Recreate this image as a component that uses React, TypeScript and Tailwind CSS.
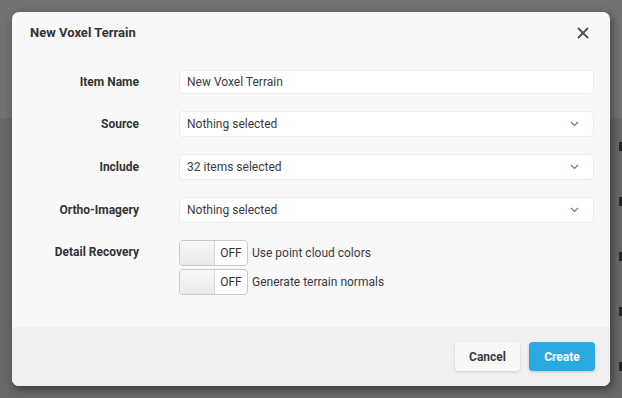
import React from 'react';
import { X } from 'lucide-react';

const Chevron = () => (
  <svg width="9" height="6" viewBox="0 0 9 6" className="shrink-0">
    <polyline points="1,1 4.5,4.5 8,1" fill="none" stroke="#6b7890" strokeWidth="1.2" />
  </svg>
);

const Select = ({ value }: { value: string }) => (
  <div className="flex h-[26px] flex-1 items-center justify-between rounded-[4px] border border-[#ececec] bg-white pl-[7px] pr-[14px] text-[12px] text-[#3a3a44]">
    <span>{value}</span>
    <Chevron />
  </div>
);

const Toggle = ({ label }: { label: string }) => (
  <div className="flex items-center gap-[4px]">
    <div className="flex h-[26px] w-[69px] overflow-hidden rounded-[4px] border border-[#c9c9c9] bg-white">
      <div className="w-[35px] border-r border-[#d4d4d4] bg-gradient-to-b from-[#f7f7f7] to-[#eaeaea]" />
      <div className="flex flex-1 items-center justify-center text-[12px] text-[#333]">OFF</div>
    </div>
    <span className="text-[12px] text-[#3a3a44]">{label}</span>
  </div>
);

const rows = [
  { label: 'Source', value: 'Nothing selected' },
  { label: 'Include', value: '32 items selected' },
  { label: 'Ortho-Imagery', value: 'Nothing selected' },
];

export default function App() {
  return (
    <div className="relative h-[398px] w-[622px] overflow-hidden bg-[#686868] font-['Roboto',sans-serif]">
      <div className="h-[118px] bg-[#727272]" />
      <div className="flex flex-col items-end gap-[46px] pt-[24px]">
        {[0, 1, 2, 3, 4].map((i) => (
          <div key={i} className="h-[9px] w-[3px] bg-[#2c2620]" />
        ))}
      </div>

      <div className="absolute inset-0 flex items-center justify-center">
        <div className="flex h-[374px] w-[598px] flex-col overflow-hidden rounded-[7px] bg-[#f8f8f8] shadow-[2px_3px_10px_rgba(0,0,0,0.45)]">
          <div className="flex h-[42px] shrink-0 items-center justify-between px-[18px]">
            <h1 className="text-[13px] font-bold text-[#333]">New Voxel Terrain</h1>
            <X size={18} strokeWidth={2.6} className="text-[#555]" />
          </div>

          <div className="flex flex-1 flex-col gap-[17px] pt-[16px] pr-[16px]">
            <div className="flex h-[24px] items-center">
              <label className="w-[127px] shrink-0 text-right text-[12px] font-bold text-[#333]">Item Name</label>
              <div className="ml-[40px] flex h-[24px] flex-1 items-center rounded-[3px] border border-[#ececec] bg-white pl-[7px] text-[12px] text-[#3a3a44]">
                New Voxel Terrain
              </div>
            </div>
            {rows.map((r) => (
              <div key={r.label} className="flex h-[26px] items-center">
                <label className="w-[127px] shrink-0 text-right text-[12px] font-bold text-[#333]">{r.label}</label>
                <div className="ml-[40px] flex flex-1">
                  <Select value={r.value} />
                </div>
              </div>
            ))}
            <div className="flex">
              <label className="w-[127px] shrink-0 pt-[3px] text-right text-[12px] font-bold text-[#333]">Detail Recovery</label>
              <div className="ml-[40px] flex flex-col gap-[3px]">
                <Toggle label="Use point cloud colors" />
                <Toggle label="Generate terrain normals" />
              </div>
            </div>
          </div>

          <div className="flex h-[59px] shrink-0 items-center justify-end gap-[9px] bg-[#f0f0f0] pr-[15px]">
            <button className="h-[29px] w-[65px] rounded-[4px] bg-[#f8f8f8] text-[12px] font-bold text-[#3a3a44] shadow-[0_1px_3px_rgba(0,0,0,0.15)]">
              Cancel
            </button>
            <button className="h-[29px] w-[66px] rounded-[4px] bg-[#29abe2] text-[12px] font-bold text-white shadow-[0_1px_3px_rgba(0,0,0,0.2)]">
              Create
            </button>
          </div>
        </div>
      </div>
    </div>
  );
}
